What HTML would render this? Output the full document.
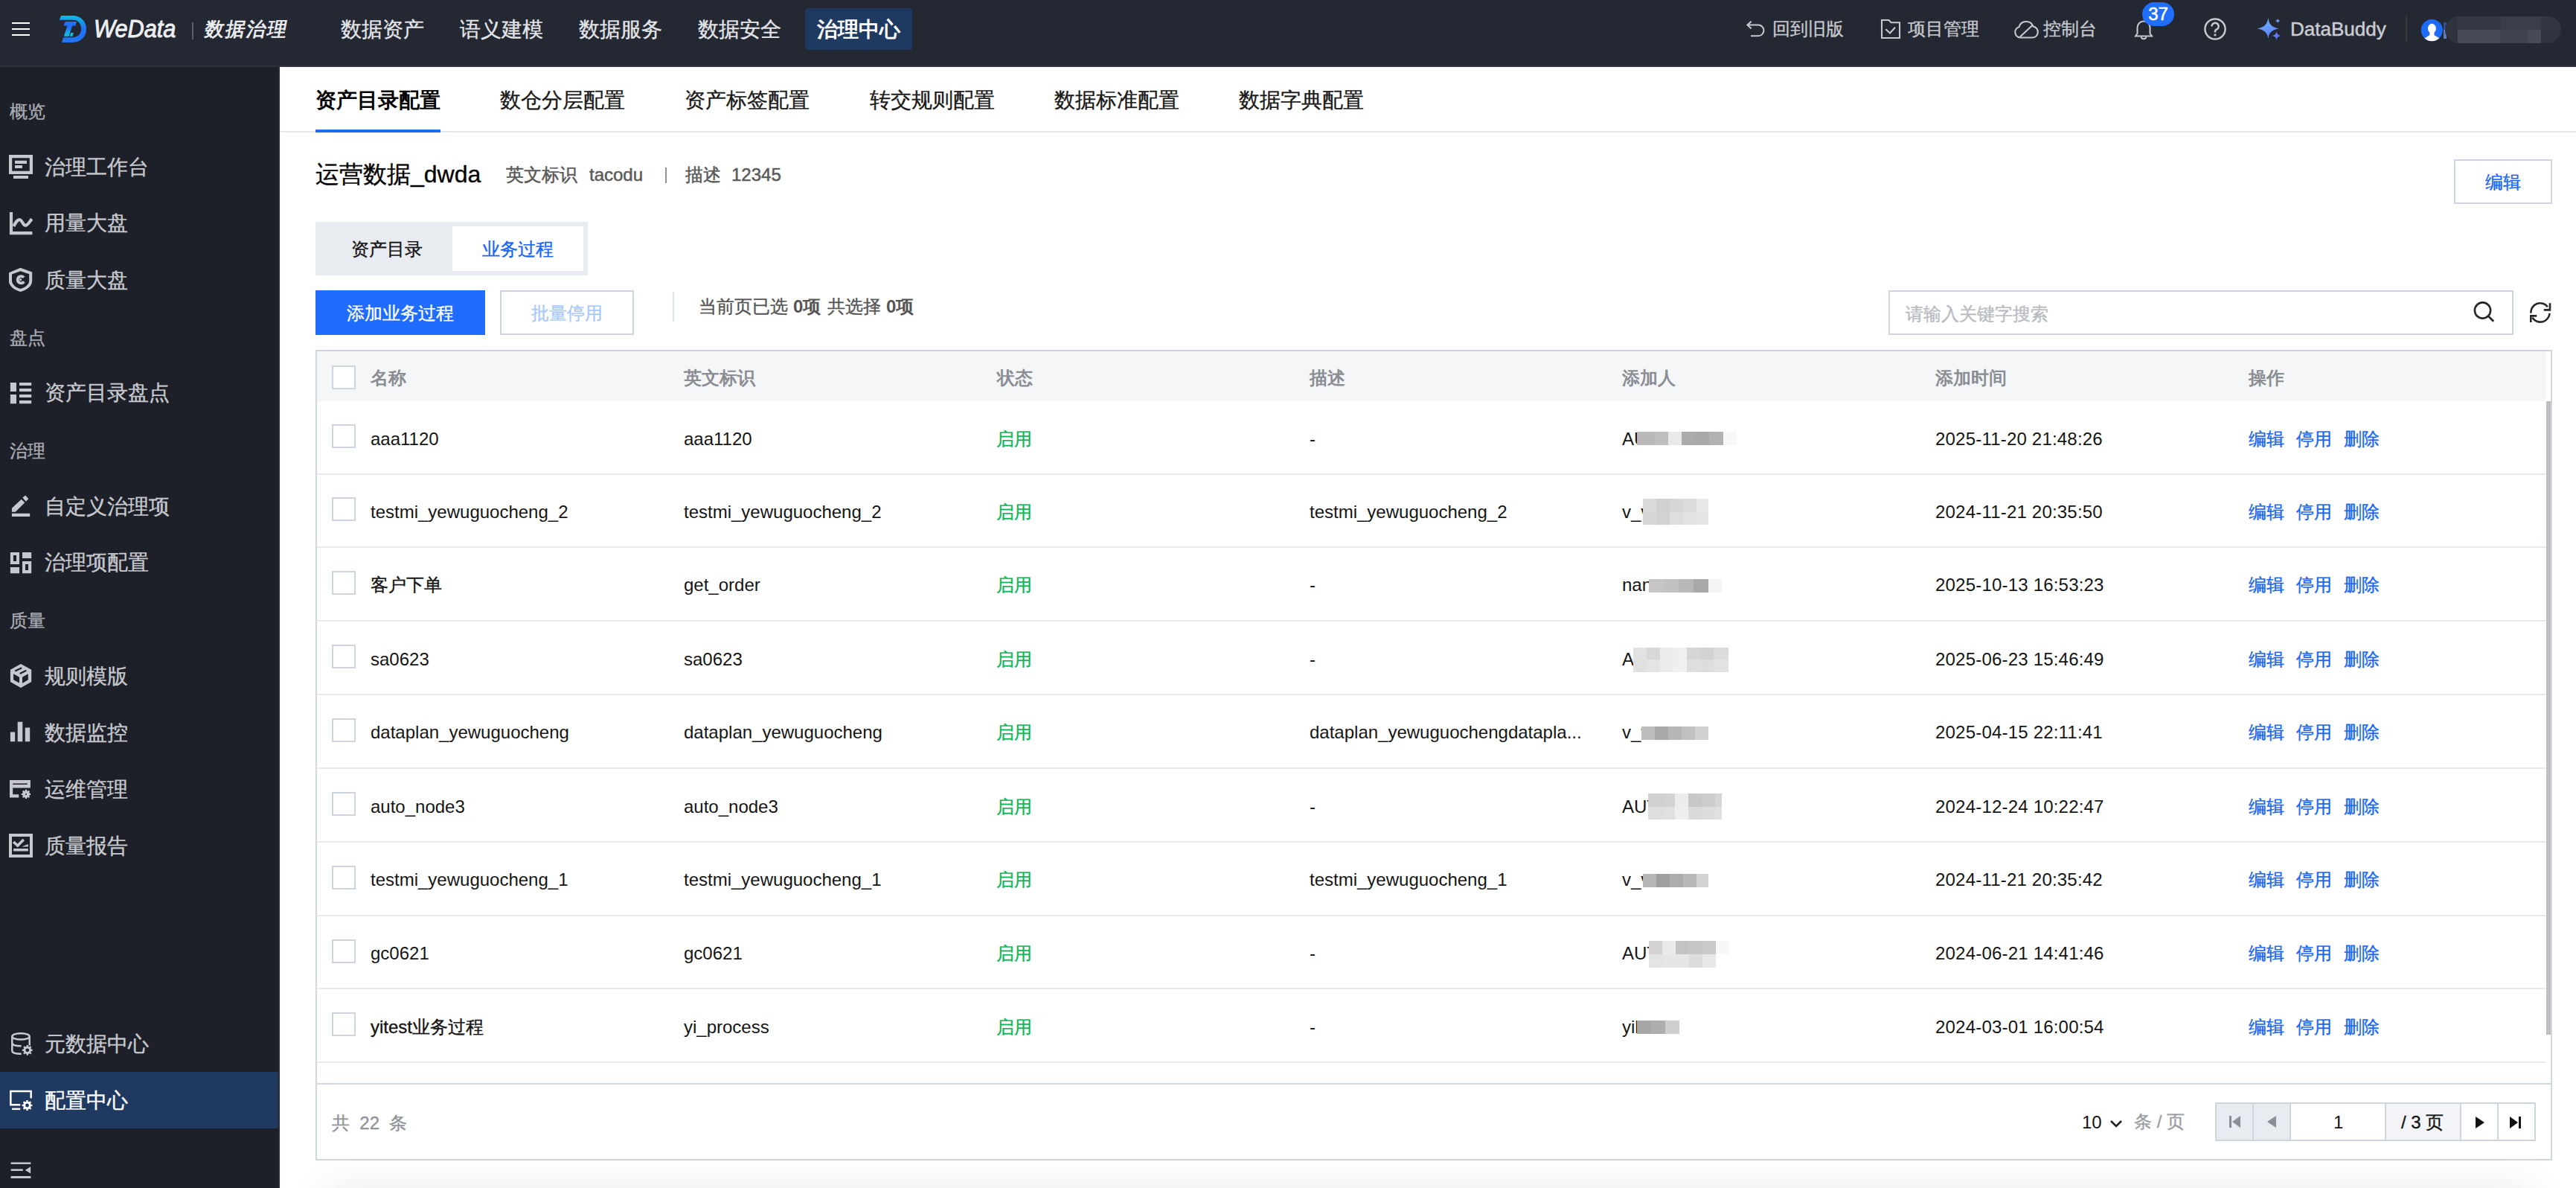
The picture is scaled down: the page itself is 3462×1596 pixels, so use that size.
<!DOCTYPE html>
<html><head><meta charset="utf-8">
<style>
*{box-sizing:border-box;margin:0;padding:0}
html,body{width:3462px;height:1596px;overflow:hidden;background:#fff;font-family:"Liberation Sans",sans-serif}
body{-webkit-text-stroke-width:0.35px}
.lat{-webkit-text-stroke-width:0}
.a{position:absolute;white-space:nowrap}
#hdr{position:absolute;left:0;top:0;width:3462px;height:90px;background:#242833;border-bottom:2px solid #2e323d}
#side{position:absolute;left:0;top:90px;width:376px;height:1506px;background:#1d2029;border-right:2px solid #2a2e38}
.nav{font-size:28px;line-height:28px;color:#e3e4e7;top:26px}
.meta{color:#595959;-webkit-text-stroke:0.5px #595959}
.rt{font-size:24px;line-height:24px;color:#c6c8cd}
.sg{font-size:24px;line-height:24px;color:#a9acb2;left:13px}
.si{font-size:28px;line-height:28px;color:#c6c8cd;left:60px}
.ic{position:absolute;left:12px;width:32px;height:32px}
.tab{font-size:28px;line-height:28px;color:#1a1a1a;top:121px}
.t24{font-size:24px;line-height:24px}
.th{font-size:24px;line-height:24px;color:#8a8d93;font-weight:bold}
.td{font-size:24px;line-height:24px;color:#151515}
.cb{position:absolute;left:446px;width:32px;height:32px;border:2px solid #cfd5df;background:#fff}
.rl{position:absolute;left:426px;width:2996px;height:2px;background:#e7eaef}
.ok{color:#0cb756}
.op{color:#1766f5}
</style></head><body>
<div id="hdr">
  <!-- hamburger -->
  <div class="a" style="left:16px;top:30px;width:24px;height:2px;background:#fff"></div>
  <div class="a" style="left:16px;top:38px;width:24px;height:2px;background:#fff"></div>
  <div class="a" style="left:16px;top:46px;width:24px;height:2px;background:#fff"></div>
  <!-- logo -->
  <svg class="a" style="left:80px;top:21px;overflow:visible" width="37" height="37" viewBox="0 0 37 37">
    <defs><linearGradient id="lg" x1="0" y1="0" x2="0" y2="1"><stop offset="0" stop-color="#0cbde0"/><stop offset="0.5" stop-color="#2070fa"/><stop offset="1" stop-color="#1f76f2"/></linearGradient>
    <linearGradient id="lg2" x1="0" y1="0" x2="0" y2="1"><stop offset="0" stop-color="#2173f8"/><stop offset="0.4" stop-color="#2070fa"/><stop offset="1" stop-color="#0dc8e0"/></linearGradient></defs>
    <path d="M2 0 H18 C28.5 0 36 8 36 18 C36 28 28.5 35.9 18 35.9 H3.1 L5.2 29.3 H18 C24.5 29.3 29.2 24.5 29.2 17.6 C29.2 10.5 24.5 5.8 18 5.8 H-0.1 Z" fill="url(#lg)"/>
    <path d="M7.7 8 H22.9 L21.3 13.6 H17.2 L12.6 27.7 H5.9 L10.5 13.6 H5.4 Z" fill="url(#lg2)"/>
    <path d="M15.5 23.1 H19 L17.2 27.7 H13.8 Z" fill="#0fc6e2"/>
  </svg>
  <div class="a" style="left:126px;top:22px;font-size:33px;line-height:33px;color:#eeeff1;font-style:italic;-webkit-text-stroke:0.9px #eeeff1;transform:scaleX(0.93);transform-origin:0 0">WeData</div>
  <div class="a" style="left:258px;top:30px;width:2px;height:23px;background:#5b5f68"></div>
  <div class="a" style="left:273px;top:26px;font-size:26px;line-height:26px;letter-spacing:2px;color:#eceef0;-webkit-text-stroke:0.8px #eceef0;transform:skewX(-11deg);transform-origin:0 100%">数据治理</div>
  <!-- nav -->
  <div class="a nav" style="left:458px">数据资产</div>
  <div class="a nav" style="left:618px">语义建模</div>
  <div class="a nav" style="left:778px">数据服务</div>
  <div class="a nav" style="left:938px">数据安全</div>
  <div class="a" style="left:1082px;top:11px;width:144px;height:56px;background:#1f3a60;border-radius:4px"></div>
  <div class="a nav lat" style="left:1098px;color:#fff;font-weight:bold">治理中心</div>
  <!-- right -->
  <div class="a rt" style="left:2382px;top:27px">回到旧版</div>
  <div class="a rt" style="left:2564px;top:27px">项目管理</div>
  <div class="a rt" style="left:2746px;top:27px">控制台</div>
  <div class="a" style="left:3078px;top:26px;font-size:26px;line-height:26px;color:#caccd1;-webkit-text-stroke:0.5px #caccd1">DataBuddy</div>
  <div class="a" style="left:3233px;top:21px;width:2px;height:35px;background:#3b3934"></div>
  <svg class="a" style="left:2346px;top:26px" width="26" height="26" viewBox="0 0 26 26"><path fill="none" stroke="#c6c8cd" stroke-width="2.1" d="M7.7 2.7 L2.4 7.5 L7.7 12.5 M2.4 7.5 H17 A7.4 7.4 0 0 1 17 22.3 H7"/></svg>
  <svg class="a" style="left:2527px;top:25px" width="28" height="28" viewBox="0 0 28 28"><path fill="none" stroke="#c6c8cd" stroke-width="2.1" d="M2 2 H11.5 L14.5 5.2 H26 V26 H2 Z"/><path fill="none" stroke="#c6c8cd" stroke-width="2.1" d="M7.3 14.3 L13 19.5 L20 11.8"/></svg>
  <svg class="a" style="left:2705px;top:25px" width="36" height="28" viewBox="0 0 36 28"><path fill="none" stroke="#c6c8cd" stroke-width="2.1" d="M10 25.5 H26 A7.5 7.5 0 0 0 27.5 10.6 A10 10 0 0 0 8.5 11.2 A7.3 7.3 0 0 0 10 25.5 Z"/><path fill="none" stroke="#c6c8cd" stroke-width="2.1" d="M9.8 24.5 L26.4 9"/></svg>
  <svg class="a" style="left:2868px;top:26px" width="26" height="28" viewBox="0 0 26 28"><path fill="none" stroke="#c6c8cd" stroke-width="2.1" d="M2 22.5 H24 L21.5 19 V11 A8.5 8.5 0 0 0 4.5 11 V19 Z"/><path fill="none" stroke="#c6c8cd" stroke-width="2.1" d="M9.5 23.5 A3.6 3.6 0 0 0 16.5 23.5"/></svg>
  <div class="a" style="left:2879px;top:3px;width:43px;height:32px;border-radius:16px;background:#1f6efc"></div>
  <div class="a" style="left:2879px;top:7px;width:43px;text-align:center;font-size:24px;line-height:24px;color:#fff;-webkit-text-stroke:0.6px #fff">37</div>
  <svg class="a" style="left:2961px;top:23px" width="32" height="32" viewBox="0 0 32 32"><circle cx="16" cy="16" r="13.6" fill="none" stroke="#c6c8cd" stroke-width="2.5"/><path fill="none" stroke="#c6c8cd" stroke-width="2.6" d="M11.5 12.5 A4.6 4.6 0 1 1 17.5 16.8 C16.2 17.4 16 18 16 19.5 V20.5"/><rect x="14.6" y="22.6" width="2.8" height="2.8" fill="#c6c8cd"/></svg>
  <svg class="a" style="left:3032px;top:22px" width="36" height="34" viewBox="0 0 36 34"><defs><linearGradient id="sg" x1="0" y1="0" x2="0.3" y2="1"><stop offset="0" stop-color="#74b7ff"/><stop offset="1" stop-color="#5b7cf6"/></linearGradient></defs><path fill="url(#sg)" d="M16.3 1.7 C17.5 10 20 14 30.5 16.3 C20 18.6 17.5 22.6 16.3 30 C15 22.6 12.5 18.6 1.7 16.3 C12.5 14 15 10 16.3 1.7Z M29.2 2.5 C29.6 4.8 30.3 5.6 32.7 6 C30.3 6.4 29.6 7.2 29.2 9.5 C28.8 7.2 28.1 6.4 25.7 6 C28.1 5.6 28.8 4.8 29.2 2.5Z M27.5 20 C28.1 23.5 29 24.6 33 26 C29 27.4 28.1 28.5 27.5 32 C26.9 28.5 26 27.4 22 26 C26 24.6 26.9 23.5 27.5 20Z"/></svg>
  <svg class="a" style="left:3253px;top:25px" width="31" height="31" viewBox="0 0 31 31"><defs><clipPath id="av"><circle cx="15.3" cy="15.6" r="14.6"/></clipPath></defs><circle cx="15.3" cy="15.6" r="14.6" fill="#1c6cf6"/><g clip-path="url(#av)" fill="#fff"><ellipse cx="15.4" cy="13.2" rx="5.5" ry="6.4"/><path d="M12.4 18 H18.4 L18.6 22.2 L28.8 28.5 V32 H2 V28.5 L12.2 22.2 Z"/></g></svg>
  <div class="a" style="left:3284px;top:30px;width:4px;height:10px;background:#345291"></div>
  <div class="a" style="left:3284px;top:40px;width:4px;height:12px;background:#6080bb"></div>
  <div class="a" style="left:3286px;top:22px;width:156px;height:36px;border-radius:18px;overflow:hidden;background:#2f333d">
    <div class="a" style="left:17px;top:0;width:58px;height:18px;background:#353943"></div>
    <div class="a" style="left:75px;top:0;width:54px;height:18px;background:#3a3e48"></div>
    <div class="a" style="left:129px;top:0;width:27px;height:18px;background:#333741"></div>
    <div class="a" style="left:17px;top:18px;width:57px;height:18px;background:#454953"></div>
    <div class="a" style="left:74px;top:18px;width:37px;height:18px;background:#40444e"></div>
    <div class="a" style="left:111px;top:18px;width:18px;height:18px;background:#474b55"></div>
  </div>
</div>

<div id="side">
  <div class="a sg" style="top:48px">概览</div>
  <svg class="a" style="left:12px;top:117px" width="32" height="34" viewBox="0 0 32 34"><path fill="#c6c8cd" fill-rule="evenodd" d="M0 1H32V27H0Z M4.2 5.2V22.8H27.8V5.2Z M8 8.7H24V13H8Z M8 15H18V19H8Z M6 29H26V33H6Z"/></svg>
  <div class="a si" style="top:121px">治理工作台</div>
  <svg class="a" style="left:12px;top:195px" width="32" height="34" viewBox="0 0 32 34"><path fill="#c6c8cd" d="M0.9 -0.2H5.1V26.1H31.4V30.2H0.9Z"/><path fill="none" stroke="#c6c8cd" stroke-width="4.2" d="M6.3 19 C9 14 11.5 9.5 14.8 10.2 C18 11 18.8 17.8 22.2 17.8 C25.5 17.8 27.8 12.5 30.8 9.2"/></svg>
  <div class="a si" style="top:196px">用量大盘</div>
  <svg class="a" style="left:12px;top:270px" width="32" height="34" viewBox="0 0 32 34"><path fill="#c6c8cd" fill-rule="evenodd" d="M15.5 -0.2 L31.2 5.4 V17 C31.2 24.5 24 29.6 15.5 32 C7 29.6 -0.1 24.5 -0.1 17 V6.2 Z M15.5 4.2 L4 8.5 V17 C4 22.3 9 26.3 15.5 28 C22 26.3 27.2 22.3 27.2 17 V8.2 Z"/><path fill="none" stroke="#c6c8cd" stroke-width="3.8" d="M20 12.8 A4.7 4.7 0 1 0 20.2 18.4"/><circle cx="15.6" cy="15.6" r="1.6" fill="#c6c8cd"/></svg>
  <div class="a si" style="top:273px">质量大盘</div>
  <div class="a sg" style="top:352px">盘点</div>
  <svg class="a" style="left:12px;top:422px" width="32" height="34" viewBox="0 0 32 34"><path fill="#c6c8cd" d="M1.9 1.9H10V14H1.9Z M1.9 18H10V30.2H1.9Z M14 1.9H30.2V6H14Z M14 10H30.2V14H14Z M14 18H30.2V22H14Z M14 26H30.2V30.2H14Z"/></svg>
  <div class="a si" style="top:424px">资产目录盘点</div>
  <div class="a sg" style="top:504px">治理</div>
  <svg class="a" style="left:12px;top:574px" width="32" height="34" viewBox="0 0 32 34"><path fill="#c6c8cd" d="M3.9 25.8H28.2V29.9H3.9Z M3.9 18.8 L16.7 6.7 L21.3 11.2 L8.7 23.8 H3.9Z M18.3 4.6 L22.3 1.6 L26.3 6.2 L22.8 9.7Z"/></svg>
  <div class="a si" style="top:577px">自定义治理项</div>
  <svg class="a" style="left:12px;top:650px" width="32" height="34" viewBox="0 0 32 34"><path fill="#c6c8cd" fill-rule="evenodd" d="M1.9 1.9H14V18H1.9Z M5.9 5.9V14H10V5.9Z M18 1.9H30.2V10H18Z M1.9 22H14V30.2H1.9Z M18 14H30.2V30.2H18Z M22 18V26H26V18Z"/></svg>
  <div class="a si" style="top:652px">治理项配置</div>
  <div class="a sg" style="top:732px">质量</div>
  <svg class="a" style="left:12px;top:802px" width="32" height="34" viewBox="0 0 32 34"><path fill="#c6c8cd" fill-rule="evenodd" d="M16 -0.1 L30.2 7.7 V23.9 L16 32 L1.9 23.9 V7.7Z M6.1 13.3 L14 17.8 V25.4 L6.1 21.3Z M18 17.8 L25.8 13.3 V21.3 L18 25.9Z"/><path stroke="#1d2029" stroke-width="2.2" d="M8.2 9.4 L17.2 5.2 M14.7 12.9 L23.3 8.7"/></svg>
  <div class="a si" style="top:805px">规则模版</div>
  <svg class="a" style="left:12px;top:878px" width="32" height="34" viewBox="0 0 32 34"><path fill="#c6c8cd" d="M1.9 15.5H8.2V28.2H1.9Z M11.7 1.7H18.3V28.2H11.7Z M21.8 9.5H28.2V28.2H21.8Z"/></svg>
  <div class="a si" style="top:881px">数据监控</div>
  <svg class="a" style="left:12px;top:954px" width="32" height="34" viewBox="0 0 32 34"><path fill="#c6c8cd" fill-rule="evenodd" d="M1 4 H28.9 V14.6 H5.2 V23.2 H13.2 V27.5 H1 Z M5.2 8.5 H24.8 V10.1 H5.2 Z"/><path fill="#c6c8cd" fill-rule="evenodd" d="M29.22 21.91 L29.22 23.89 L27.76 24.04 L27.18 25.46 L28.10 26.60 L26.70 28.00 L25.56 27.08 L24.14 27.66 L23.99 29.12 L22.01 29.12 L21.86 27.66 L20.44 27.08 L19.30 28.00 L17.90 26.60 L18.82 25.46 L18.24 24.04 L16.78 23.89 L16.78 21.91 L18.24 21.76 L18.82 20.34 L17.90 19.20 L19.30 17.80 L20.44 18.72 L21.86 18.14 L22.01 16.68 L23.99 16.68 L24.14 18.14 L25.56 18.72 L26.70 17.80 L28.10 19.20 L27.18 20.34 L27.76 21.76Z M24.00 22.90 A1.0 1.0 0 1 0 22.00 22.90 A1.0 1.0 0 1 0 24.00 22.90Z"/></svg>
  <div class="a si" style="top:957px">运维管理</div>
  <svg class="a" style="left:12px;top:1030px" width="32" height="34" viewBox="0 0 32 34"><path fill="#c6c8cd" fill-rule="evenodd" d="M-0.1 -0.1H32V32H-0.1Z M4 4V28H28V4Z M6.1 20.1H25.8V23.6H6.1Z M17.2 17.6 L25.8 14 V17.6Z"/><path fill="none" stroke="#c6c8cd" stroke-width="3.6" d="M6.1 11 L11.7 16.1 L19.8 8"/></svg>
  <div class="a si" style="top:1033px">质量报告</div>
  <svg class="a" style="left:14px;top:1297px" width="32" height="34" viewBox="0 0 32 34"><g fill="none" stroke="#c6c8cd" stroke-width="2.5"><ellipse cx="14" cy="5.4" rx="11.7" ry="4.2"/><path d="M2.3 5.4 V24.5 C2.3 27 6.5 28.8 14.7 28.8 M2.3 14 C2.3 16.5 6.5 18.3 14.7 18.3 M25.7 5.4 V17.4"/></g><path fill="#c6c8cd" fill-rule="evenodd" d="M29.71 22.70 L29.71 24.90 L27.95 25.04 L27.32 26.57 L28.46 27.91 L26.91 29.46 L25.57 28.32 L24.04 28.95 L23.90 30.71 L21.70 30.71 L21.56 28.95 L20.03 28.32 L18.69 29.46 L17.14 27.91 L18.28 26.57 L17.65 25.04 L15.89 24.90 L15.89 22.70 L17.65 22.56 L18.28 21.03 L17.14 19.69 L18.69 18.14 L20.03 19.28 L21.56 18.65 L21.70 16.89 L23.90 16.89 L24.04 18.65 L25.57 19.28 L26.91 18.14 L28.46 19.69 L27.32 21.03 L27.95 22.56Z M25.20 23.80 A2.4 2.4 0 1 0 20.40 23.80 A2.4 2.4 0 1 0 25.20 23.80Z"/></svg>
  <div class="a si" style="top:1299px">元数据中心</div>
  <div class="a" style="left:0;top:1350px;width:374px;height:76px;background:#1f3961;border-radius:0 3px 3px 0"></div>
  <svg class="a" style="left:13px;top:1374px" width="32" height="30" viewBox="0 0 32 30"><path fill="none" stroke="#fff" stroke-width="2.5" d="M1.35 21.6 V2.05 H28.65 V11.5 M1.35 20.35 H14.2"/><path fill="#fff" d="M3.1 24.6H14.2V27.1H3.1Z"/><path fill="#fff" fill-rule="evenodd" d="M30.41 19.90 L30.41 22.10 L28.65 22.24 L28.02 23.77 L29.16 25.11 L27.61 26.66 L26.27 25.52 L24.74 26.15 L24.60 27.91 L22.40 27.91 L22.26 26.15 L20.73 25.52 L19.39 26.66 L17.84 25.11 L18.98 23.77 L18.35 22.24 L16.59 22.10 L16.59 19.90 L18.35 19.76 L18.98 18.23 L17.84 16.89 L19.39 15.34 L20.73 16.48 L22.26 15.85 L22.40 14.09 L24.60 14.09 L24.74 15.85 L26.27 16.48 L27.61 15.34 L29.16 16.89 L28.02 18.23 L28.65 19.76Z M25.90 21.00 A2.4 2.4 0 1 0 21.10 21.00 A2.4 2.4 0 1 0 25.90 21.00Z"/></svg>
  <div class="a si" style="top:1375px;color:#fff">配置中心</div>
  <svg class="a" style="left:14px;top:1470px" width="28" height="24" viewBox="0 0 28 24"><path fill="#c6c8cd" d="M0.6 1.4H27.4V3.9H0.6Z M0.6 10.4H16.8V13H0.6Z M0.6 19.9H27.4V22.9H0.6Z M27.2 7.3 V16.4 L19.8 11.9Z"/></svg>
</div>

<div id="main">
  <!-- tabs -->
  <div class="a tab lat" style="left:424px;font-weight:bold;color:#000">资产目录配置</div>
  <div class="a tab" style="left:672px">数仓分层配置</div>
  <div class="a tab" style="left:920px">资产标签配置</div>
  <div class="a tab" style="left:1169px">转交规则配置</div>
  <div class="a tab" style="left:1417px">数据标准配置</div>
  <div class="a tab" style="left:1665px">数据字典配置</div>
  <div class="a" style="left:376px;top:176px;width:3086px;height:2px;background:#e4e7ec"></div>
  <div class="a" style="left:424px;top:174px;width:168px;height:4px;background:#1d6cf2"></div>
  <!-- title -->
  <div class="a" style="left:424px;top:218px;font-size:32px;line-height:32px;color:#000">运营数据_dwda</div>
  <div class="a t24 meta" style="left:680px;top:223px">英文标识</div>
  <div class="a t24 meta" style="left:792px;top:223px">tacodu</div>
  <div class="a" style="left:894px;top:225px;width:2px;height:21px;background:#8f9196"></div>
  <div class="a t24 meta" style="left:921px;top:223px">描述</div>
  <div class="a t24 meta" style="left:983px;top:223px">12345</div>
  <div class="a" style="left:3298px;top:214px;width:132px;height:60px;border:2px solid #cfd5de;background:#fff"></div>
  <div class="a t24" style="left:3340px;top:233px;color:#1766f5">编辑</div>
  <!-- segmented -->
  <div class="a" style="left:424px;top:298px;width:366px;height:72px;background:#e8ebf0"></div>
  <div class="a" style="left:608px;top:304px;width:176px;height:60px;background:#fff"></div>
  <div class="a t24" style="left:472px;top:323px;color:#151515">资产目录</div>
  <div class="a t24" style="left:648px;top:323px;color:#1766f5">业务过程</div>
  <!-- toolbar -->
  <div class="a" style="left:424px;top:390px;width:228px;height:60px;background:#1f6cff"></div>
  <div class="a t24" style="left:466px;top:409px;color:#fff">添加业务过程</div>
  <div class="a" style="left:672px;top:390px;width:180px;height:60px;border:2px solid #cfd5de;background:#fff"></div>
  <div class="a t24" style="left:714px;top:409px;color:#a9c8fb">批量停用</div>
  <div class="a" style="left:904px;top:392px;width:2px;height:40px;background:#dde3ec"></div>
  <div class="a t24" style="left:939px;top:400px;color:#555">当前页已选</div>
  <div class="a t24" style="left:1066px;top:400px;color:#555;font-weight:bold;-webkit-text-stroke-width:0">0项</div>
  <div class="a t24" style="left:1112px;top:400px;color:#555">共选择</div>
  <div class="a t24" style="left:1191px;top:400px;color:#555;font-weight:bold;-webkit-text-stroke-width:0">0项</div>
  <div class="a" style="left:2538px;top:390px;width:840px;height:60px;border:2px solid #cfd5de;background:#fff"></div>
  <div class="a t24" style="left:2561px;top:410px;color:#b8bbc0">请输入关键字搜索</div>
  <svg class="a" style="left:3322px;top:403px" width="34" height="34" viewBox="0 0 34 34"><circle cx="14.5" cy="14" r="10.6" fill="none" stroke="#262626" stroke-width="2.6"/><path d="M22.1 21.6L29.2 28.8" stroke="#262626" stroke-width="2.7"/></svg>
  <svg class="a" style="left:3398px;top:404px" width="32" height="32" viewBox="0 0 32 32"><g fill="none" stroke="#262626" stroke-width="2.6"><path d="M3.3 16.6 A12.6 12.6 0 0 1 25.9 8.2"/><path d="M20.8 12.4 H29 V3.2"/><path d="M28.6 16.8 A12.6 12.6 0 0 1 5.4 22.8"/><path d="M11.2 20.4 H3.3 V29"/></g></svg>
  <!-- table -->
  <div class="a" style="left:424px;top:470px;width:3006px;height:1089px;border:2px solid #cfd6e0;background:#fff"></div>
  <div class="a" style="left:426px;top:472px;width:2996px;height:67px;background:#f5f6f8"></div>
  <div class="cb" style="top:491px"></div>
  <div class="a th lat" style="left:498px;top:496px">名称</div>
  <div class="a th lat" style="left:919px;top:496px">英文标识</div>
  <div class="a th lat" style="left:1340px;top:496px">状态</div>
  <div class="a th lat" style="left:1760px;top:496px">描述</div>
  <div class="a th lat" style="left:2180px;top:496px">添加人</div>
  <div class="a th lat" style="left:2601px;top:496px">添加时间</div>
  <div class="a th lat" style="left:3022px;top:496px">操作</div>
  <div class="a" style="left:3422px;top:539px;width:6px;height:851px;background:#bfbfbf"></div>
  <div class="cb" style="top:570px"></div>
  <div class="a td lat" style="left:498px;top:578px">aaa1120</div>
  <div class="a td lat" style="left:919px;top:578px">aaa1120</div>
  <div class="a td ok" style="left:1339px;top:578px">启用</div>
  <div class="a td lat" style="left:1760px;top:578px">-</div>
  <div class="a td lat" style="left:2180px;top:578px">AU</div>
  <div class="a" style="left:2200px;top:580.0px;width:24px;height:18px;background:#b8b8b8"></div><div class="a" style="left:2224px;top:580.0px;width:18px;height:18px;background:#bebebe"></div><div class="a" style="left:2242px;top:580.0px;width:18px;height:18px;background:#e9e9e9"></div><div class="a" style="left:2260px;top:580.0px;width:18px;height:18px;background:#ababab"></div><div class="a" style="left:2278px;top:580.0px;width:19px;height:18px;background:#a9a9a9"></div><div class="a" style="left:2297px;top:580.0px;width:19px;height:18px;background:#b2b2b2"></div><div class="a" style="left:2316px;top:580.0px;width:18px;height:18px;background:#f8f8f8"></div>
  <div class="a td lat" style="left:2601px;top:578px;letter-spacing:0.2px">2025-11-20 21:48:26</div>
  <div class="a td op" style="left:3022px;top:578px">编辑</div>
  <div class="a td op" style="left:3086px;top:578px">停用</div>
  <div class="a td op" style="left:3150px;top:578px">删除</div>
  <div class="rl" style="top:636px"></div>
  <div class="cb" style="top:668px"></div>
  <div class="a td lat" style="left:498px;top:676px">testmi_yewuguocheng_2</div>
  <div class="a td lat" style="left:919px;top:676px">testmi_yewuguocheng_2</div>
  <div class="a td ok" style="left:1339px;top:676px">启用</div>
  <div class="a td lat" style="left:1760px;top:676px">testmi_yewuguocheng_2</div>
  <div class="a td lat" style="left:2180px;top:676px">v_v</div>
  <div class="a" style="left:2208px;top:670.0px;width:18px;height:17.5px;background:#dadada"></div><div class="a" style="left:2226px;top:670.0px;width:18px;height:17.5px;background:#d0d0d0"></div><div class="a" style="left:2244px;top:670.0px;width:18px;height:17.5px;background:#d6d6d6"></div><div class="a" style="left:2262px;top:670.0px;width:18px;height:17.5px;background:#dcdcdc"></div><div class="a" style="left:2280px;top:670.0px;width:16px;height:17.5px;background:#e8e8e8"></div><div class="a" style="left:2208px;top:687.5px;width:18px;height:17.5px;background:#d6d6d6"></div><div class="a" style="left:2226px;top:687.5px;width:18px;height:17.5px;background:#d2d2d2"></div><div class="a" style="left:2244px;top:687.5px;width:18px;height:17.5px;background:#dedede"></div><div class="a" style="left:2262px;top:687.5px;width:18px;height:17.5px;background:#e2e2e2"></div><div class="a" style="left:2280px;top:687.5px;width:16px;height:17.5px;background:#e6e6e6"></div>
  <div class="a td lat" style="left:2601px;top:676px;letter-spacing:0.2px">2024-11-21 20:35:50</div>
  <div class="a td op" style="left:3022px;top:676px">编辑</div>
  <div class="a td op" style="left:3086px;top:676px">停用</div>
  <div class="a td op" style="left:3150px;top:676px">删除</div>
  <div class="rl" style="top:734px"></div>
  <div class="cb" style="top:767px"></div>
  <div class="a td" style="left:498px;top:774px">客户下单</div>
  <div class="a td lat" style="left:919px;top:774px">get_order</div>
  <div class="a td ok" style="left:1339px;top:774px">启用</div>
  <div class="a td lat" style="left:1760px;top:774px">-</div>
  <div class="a td lat" style="left:2180px;top:774px">nan</div>
  <div class="a" style="left:2216px;top:778.0px;width:20px;height:18px;background:#c6c6c6"></div><div class="a" style="left:2236px;top:778.0px;width:20px;height:18px;background:#c2c2c2"></div><div class="a" style="left:2256px;top:778.0px;width:20px;height:18px;background:#b8b8b8"></div><div class="a" style="left:2276px;top:778.0px;width:20px;height:18px;background:#a9a9a9"></div><div class="a" style="left:2296px;top:778.0px;width:18px;height:18px;background:#f5f5f5"></div>
  <div class="a td lat" style="left:2601px;top:774px;letter-spacing:0.2px">2025-10-13 16:53:23</div>
  <div class="a td op" style="left:3022px;top:774px">编辑</div>
  <div class="a td op" style="left:3086px;top:774px">停用</div>
  <div class="a td op" style="left:3150px;top:774px">删除</div>
  <div class="rl" style="top:833px"></div>
  <div class="cb" style="top:866px"></div>
  <div class="a td lat" style="left:498px;top:874px">sa0623</div>
  <div class="a td lat" style="left:919px;top:874px">sa0623</div>
  <div class="a td ok" style="left:1339px;top:874px">启用</div>
  <div class="a td lat" style="left:1760px;top:874px">-</div>
  <div class="a td lat" style="left:2180px;top:874px">A</div>
  <div class="a" style="left:2195px;top:869.5px;width:18px;height:16.75px;background:#e2e2e2"></div><div class="a" style="left:2213px;top:869.5px;width:18px;height:16.75px;background:#d8d8d8"></div><div class="a" style="left:2231px;top:869.5px;width:18px;height:16.75px;background:#ececec"></div><div class="a" style="left:2249px;top:869.5px;width:18px;height:16.75px;background:#f0f0f0"></div><div class="a" style="left:2267px;top:869.5px;width:18px;height:16.75px;background:#d6d6d6"></div><div class="a" style="left:2285px;top:869.5px;width:18px;height:16.75px;background:#d2d2d2"></div><div class="a" style="left:2303px;top:869.5px;width:20px;height:16.75px;background:#dcdcdc"></div><div class="a" style="left:2195px;top:886.2px;width:18px;height:16.75px;background:#e0e0e0"></div><div class="a" style="left:2213px;top:886.2px;width:18px;height:16.75px;background:#e4e4e4"></div><div class="a" style="left:2231px;top:886.2px;width:18px;height:16.75px;background:#ececec"></div><div class="a" style="left:2249px;top:886.2px;width:18px;height:16.75px;background:#f0f0f0"></div><div class="a" style="left:2267px;top:886.2px;width:18px;height:16.75px;background:#dedede"></div><div class="a" style="left:2285px;top:886.2px;width:18px;height:16.75px;background:#dddddd"></div><div class="a" style="left:2303px;top:886.2px;width:20px;height:16.75px;background:#e2e2e2"></div>
  <div class="a td lat" style="left:2601px;top:874px;letter-spacing:0.2px">2025-06-23 15:46:49</div>
  <div class="a td op" style="left:3022px;top:874px">编辑</div>
  <div class="a td op" style="left:3086px;top:874px">停用</div>
  <div class="a td op" style="left:3150px;top:874px">删除</div>
  <div class="rl" style="top:932px"></div>
  <div class="cb" style="top:965px"></div>
  <div class="a td lat" style="left:498px;top:972px">dataplan_yewuguocheng</div>
  <div class="a td lat" style="left:919px;top:972px">dataplan_yewuguocheng</div>
  <div class="a td ok" style="left:1339px;top:972px">启用</div>
  <div class="a td lat" style="left:1760px;top:972px">dataplan_yewuguochengdatapla...</div>
  <div class="a td lat" style="left:2180px;top:972px">v_v</div>
  <div class="a" style="left:2206px;top:976.0px;width:18px;height:18px;background:#bdbdbd"></div><div class="a" style="left:2224px;top:976.0px;width:18px;height:18px;background:#a9a9a9"></div><div class="a" style="left:2242px;top:976.0px;width:18px;height:18px;background:#b6b6b6"></div><div class="a" style="left:2260px;top:976.0px;width:18px;height:18px;background:#c1c1c1"></div><div class="a" style="left:2278px;top:976.0px;width:18px;height:18px;background:#d1d1d1"></div>
  <div class="a td lat" style="left:2601px;top:972px;letter-spacing:0.2px">2025-04-15 22:11:41</div>
  <div class="a td op" style="left:3022px;top:972px">编辑</div>
  <div class="a td op" style="left:3086px;top:972px">停用</div>
  <div class="a td op" style="left:3150px;top:972px">删除</div>
  <div class="rl" style="top:1031px"></div>
  <div class="cb" style="top:1064px"></div>
  <div class="a td lat" style="left:498px;top:1072px">auto_node3</div>
  <div class="a td lat" style="left:919px;top:1072px">auto_node3</div>
  <div class="a td ok" style="left:1339px;top:1072px">启用</div>
  <div class="a td lat" style="left:1760px;top:1072px">-</div>
  <div class="a td lat" style="left:2180px;top:1072px">AUT</div>
  <div class="a" style="left:2215px;top:1066.0px;width:18px;height:17.5px;background:#d0d0d0"></div><div class="a" style="left:2233px;top:1066.0px;width:18px;height:17.5px;background:#d2d2d2"></div><div class="a" style="left:2251px;top:1066.0px;width:18px;height:17.5px;background:#ececec"></div><div class="a" style="left:2269px;top:1066.0px;width:18px;height:17.5px;background:#c8c8c8"></div><div class="a" style="left:2287px;top:1066.0px;width:18px;height:17.5px;background:#cdcdcd"></div><div class="a" style="left:2305px;top:1066.0px;width:9px;height:17.5px;background:#d6d6d6"></div><div class="a" style="left:2215px;top:1083.5px;width:18px;height:17.5px;background:#dedede"></div><div class="a" style="left:2233px;top:1083.5px;width:18px;height:17.5px;background:#e0e0e0"></div><div class="a" style="left:2251px;top:1083.5px;width:18px;height:17.5px;background:#eeeeee"></div><div class="a" style="left:2269px;top:1083.5px;width:18px;height:17.5px;background:#dadada"></div><div class="a" style="left:2287px;top:1083.5px;width:18px;height:17.5px;background:#dddddd"></div><div class="a" style="left:2305px;top:1083.5px;width:9px;height:17.5px;background:#e0e0e0"></div>
  <div class="a td lat" style="left:2601px;top:1072px;letter-spacing:0.2px">2024-12-24 10:22:47</div>
  <div class="a td op" style="left:3022px;top:1072px">编辑</div>
  <div class="a td op" style="left:3086px;top:1072px">停用</div>
  <div class="a td op" style="left:3150px;top:1072px">删除</div>
  <div class="rl" style="top:1130px"></div>
  <div class="cb" style="top:1163px"></div>
  <div class="a td lat" style="left:498px;top:1170px">testmi_yewuguocheng_1</div>
  <div class="a td lat" style="left:919px;top:1170px">testmi_yewuguocheng_1</div>
  <div class="a td ok" style="left:1339px;top:1170px">启用</div>
  <div class="a td lat" style="left:1760px;top:1170px">testmi_yewuguocheng_1</div>
  <div class="a td lat" style="left:2180px;top:1170px">v_v</div>
  <div class="a" style="left:2208px;top:1174.0px;width:18px;height:17.5px;background:#b6b6b6"></div><div class="a" style="left:2226px;top:1174.0px;width:18px;height:17.5px;background:#9f9f9f"></div><div class="a" style="left:2244px;top:1174.0px;width:18px;height:17.5px;background:#acacac"></div><div class="a" style="left:2262px;top:1174.0px;width:18px;height:17.5px;background:#b9b9b9"></div><div class="a" style="left:2280px;top:1174.0px;width:16px;height:17.5px;background:#d4d4d4"></div>
  <div class="a td lat" style="left:2601px;top:1170px;letter-spacing:0.2px">2024-11-21 20:35:42</div>
  <div class="a td op" style="left:3022px;top:1170px">编辑</div>
  <div class="a td op" style="left:3086px;top:1170px">停用</div>
  <div class="a td op" style="left:3150px;top:1170px">删除</div>
  <div class="rl" style="top:1229px"></div>
  <div class="cb" style="top:1262px"></div>
  <div class="a td lat" style="left:498px;top:1269px">gc0621</div>
  <div class="a td lat" style="left:919px;top:1269px">gc0621</div>
  <div class="a td ok" style="left:1339px;top:1269px">启用</div>
  <div class="a td lat" style="left:1760px;top:1269px">-</div>
  <div class="a td lat" style="left:2180px;top:1269px">AUT</div>
  <div class="a" style="left:2216px;top:1263.5px;width:18px;height:18px;background:#d2d2d2"></div><div class="a" style="left:2234px;top:1263.5px;width:18px;height:18px;background:#eaeaea"></div><div class="a" style="left:2252px;top:1263.5px;width:18px;height:18px;background:#c3c3c3"></div><div class="a" style="left:2270px;top:1263.5px;width:18px;height:18px;background:#c6c6c6"></div><div class="a" style="left:2288px;top:1263.5px;width:18px;height:18px;background:#cacaca"></div><div class="a" style="left:2306px;top:1263.5px;width:18px;height:18px;background:#f8f8f8"></div><div class="a" style="left:2216px;top:1281.5px;width:18px;height:18px;background:#e4e4e4"></div><div class="a" style="left:2234px;top:1281.5px;width:18px;height:18px;background:#e6e6e6"></div><div class="a" style="left:2252px;top:1281.5px;width:18px;height:18px;background:#e6e6e6"></div><div class="a" style="left:2270px;top:1281.5px;width:18px;height:18px;background:#dcdcdc"></div><div class="a" style="left:2288px;top:1281.5px;width:18px;height:18px;background:#e8e8e8"></div>
  <div class="a td lat" style="left:2601px;top:1269px;letter-spacing:0.2px">2024-06-21 14:41:46</div>
  <div class="a td op" style="left:3022px;top:1269px">编辑</div>
  <div class="a td op" style="left:3086px;top:1269px">停用</div>
  <div class="a td op" style="left:3150px;top:1269px">删除</div>
  <div class="rl" style="top:1327px"></div>
  <div class="cb" style="top:1360px"></div>
  <div class="a td" style="left:498px;top:1368px">yitest业务过程</div>
  <div class="a td lat" style="left:919px;top:1368px">yi_process</div>
  <div class="a td ok" style="left:1339px;top:1368px">启用</div>
  <div class="a td lat" style="left:1760px;top:1368px">-</div>
  <div class="a td lat" style="left:2180px;top:1368px">yili</div>
  <div class="a" style="left:2200px;top:1371.0px;width:19px;height:18px;background:#a6a6a6"></div><div class="a" style="left:2219px;top:1371.0px;width:19px;height:18px;background:#aeaeae"></div><div class="a" style="left:2238px;top:1371.0px;width:19px;height:18px;background:#cecece"></div>
  <div class="a td lat" style="left:2601px;top:1368px;letter-spacing:0.2px">2024-03-01 16:00:54</div>
  <div class="a td op" style="left:3022px;top:1368px">编辑</div>
  <div class="a td op" style="left:3086px;top:1368px">停用</div>
  <div class="a td op" style="left:3150px;top:1368px">删除</div>
  <div class="rl" style="top:1426px"></div>
  <div class="a" style="left:426px;top:1455px;width:3002px;height:2px;background:#cfd6e0"></div>
  <div class="a t24" style="left:446px;top:1497px;color:#8f9297;letter-spacing:0">共&nbsp; 22 &nbsp;条</div>
  <div class="a t24 lat" style="left:2798px;top:1496px;color:#151515">10</div>
  <svg class="a" style="left:2835px;top:1504px" width="18" height="12" viewBox="0 0 18 12"><path d="M2 2L9 9L16 2" fill="none" stroke="#222" stroke-width="2.6"/></svg>
  <div class="a t24" style="left:2868px;top:1495px;color:#9a9da2">条 / 页</div>
  <div class="a" style="left:2977px;top:1481px;width:431px;height:52px;border:2px solid #cfd5de;background:#fff"></div>
  <div class="a" style="left:2979px;top:1483px;width:99px;height:48px;background:#e8ebf0"></div>
  <div class="a" style="left:3027px;top:1483px;width:2px;height:48px;background:#cfd5de"></div>
  <div class="a" style="left:3077px;top:1483px;width:2px;height:48px;background:#cfd5de"></div>
  <div class="a" style="left:3205px;top:1483px;width:103px;height:48px;background:#f3f4f7;border-left:2px solid #cfd5de;border-right:2px solid #cfd5de"></div>
  <div class="a" style="left:3356px;top:1483px;width:2px;height:48px;background:#cfd5de"></div>
  <div class="a t24 lat" style="left:3136px;top:1496px;color:#151515">1</div>
  <div class="a t24" style="left:3227px;top:1496px;color:#151515">/ 3 页</div>
  <svg class="a" style="left:2995px;top:1497px" width="18" height="20" viewBox="0 0 18 20"><path fill="#8b8e94" d="M1 2H4V18H1Z M16 2V18L5 10Z"/></svg>
  <svg class="a" style="left:3045px;top:1497px" width="16" height="20" viewBox="0 0 16 20"><path fill="#8b8e94" d="M14 2V18L2 10Z"/></svg>
  <svg class="a" style="left:3325px;top:1498px" width="16" height="20" viewBox="0 0 16 20"><path fill="#111" d="M2 2V18L14 10Z"/></svg>
  <svg class="a" style="left:3371px;top:1498px" width="18" height="20" viewBox="0 0 18 20"><path fill="#111" d="M14 2H17V18H14Z M2 2V18L13 10Z"/></svg>
  <div class="a" style="left:440px;top:1600px;width:2960px;height:60px;box-shadow:0 0 50px 8px rgba(0,0,0,0.07)"></div>
</div>
</body></html>
